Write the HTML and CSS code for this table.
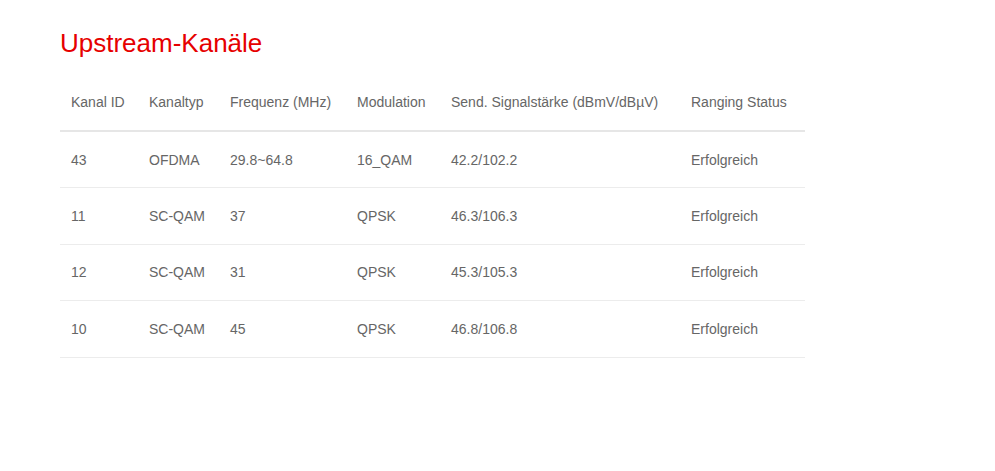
FILE: index.html
```html
<!DOCTYPE html>
<html lang="de">
<head>
  <meta charset="UTF-8" />
  <meta name="viewport" content="width=device-width, initial-scale=1.0"/>
  <title>Upstream-Kanäle</title>
  <link rel="stylesheet" href="styles.css">
</head>
<body>

  <section class="section">
    <h1>Upstream-Kanäle</h1>
    <table class="channels">
      <colgroup>
        <col class="c-id">
        <col class="c-type">
        <col class="c-freq">
        <col class="c-mod">
        <col class="c-power">
        <col class="c-status">
      </colgroup>
      <thead>
        <tr>
          <th>Kanal ID</th>
          <th>Kanaltyp</th>
          <th>Frequenz (MHz)</th>
          <th>Modulation</th>
          <th>Send. Signalstärke (dBmV/dBµV)</th>
          <th>Ranging Status</th>
        </tr>
      </thead>
      <tbody>
        <tr>
          <td>43</td><td>OFDMA</td><td>29.8~64.8</td><td>16_QAM</td><td>42.2/102.2</td><td>Erfolgreich</td>
        </tr>
        <tr>
          <td>11</td><td>SC-QAM</td><td>37</td><td>QPSK</td><td>46.3/106.3</td><td>Erfolgreich</td>
        </tr>
        <tr>
          <td>12</td><td>SC-QAM</td><td>31</td><td>QPSK</td><td>45.3/105.3</td><td>Erfolgreich</td>
        </tr>
        <tr>
          <td>10</td><td>SC-QAM</td><td>45</td><td>QPSK</td><td>46.8/106.8</td><td>Erfolgreich</td>
        </tr>
      </tbody>
    </table>
  </section>

</body>
</html>
```

FILE: styles.css
```css
* {
  margin: 0;
  padding: 0;
  box-sizing: border-box;
}

body {
  font-family: 'Liberation Sans', Arial, sans-serif;
  background-color: #fff;
  color: #666;
}

.section {
  padding: 28px 0 0 60px;
}

h1 {
  color: #e60000;
  font-size: 26px;
  font-weight: normal;
  line-height: 30px;
  margin-bottom: 16px;
}

.channels {
  width: 745px;
  border-collapse: collapse;
  table-layout: fixed;
  font-size: 14px;
}

.c-id { width: 78px; }
.c-type { width: 81px; }
.c-freq { width: 127px; }
.c-mod { width: 94px; }
.c-power { width: 240px; }
.c-status { width: 125px; }

.channels th,
.channels td {
  text-align: left;
  font-weight: normal;
  padding: 0 0 0 11px;
  white-space: nowrap;
}

.channels th {
  height: 57px;
  border-bottom: 2px solid #e6e6e6;
}

.channels td {
  height: 56.5px;
  border-bottom: 1px solid #ececec;
}
```
